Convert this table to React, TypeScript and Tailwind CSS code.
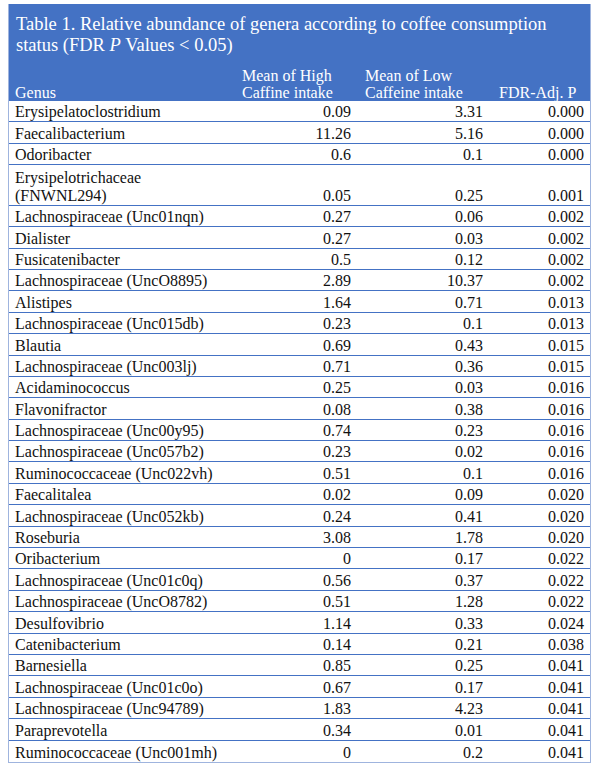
const rows: [string, string, string, string][] = [
  ['Erysipelatoclostridium', '0.09', '3.31', '0.000'],
  ['Faecalibacterium', '11.26', '5.16', '0.000'],
  ['Odoribacter', '0.6', '0.1', '0.000'],
  ['Erysipelotrichaceae\n(FNWNL294)', '0.05', '0.25', '0.001'],
  ['Lachnospiraceae (Unc01nqn)', '0.27', '0.06', '0.002'],
  ['Dialister', '0.27', '0.03', '0.002'],
  ['Fusicatenibacter', '0.5', '0.12', '0.002'],
  ['Lachnospiraceae (UncO8895)', '2.89', '10.37', '0.002'],
  ['Alistipes', '1.64', '0.71', '0.013'],
  ['Lachnospiraceae (Unc015db)', '0.23', '0.1', '0.013'],
  ['Blautia', '0.69', '0.43', '0.015'],
  ['Lachnospiraceae (Unc003lj)', '0.71', '0.36', '0.015'],
  ['Acidaminococcus', '0.25', '0.03', '0.016'],
  ['Flavonifractor', '0.08', '0.38', '0.016'],
  ['Lachnospiraceae (Unc00y95)', '0.74', '0.23', '0.016'],
  ['Lachnospiraceae (Unc057b2)', '0.23', '0.02', '0.016'],
  ['Ruminococcaceae (Unc022vh)', '0.51', '0.1', '0.016'],
  ['Faecalitalea', '0.02', '0.09', '0.020'],
  ['Lachnospiraceae (Unc052kb)', '0.24', '0.41', '0.020'],
  ['Roseburia', '3.08', '1.78', '0.020'],
  ['Oribacterium', '0', '0.17', '0.022'],
  ['Lachnospiraceae (Unc01c0q)', '0.56', '0.37', '0.022'],
  ['Lachnospiraceae (UncO8782)', '0.51', '1.28', '0.022'],
  ['Desulfovibrio', '1.14', '0.33', '0.024'],
  ['Catenibacterium', '0.14', '0.21', '0.038'],
  ['Barnesiella', '0.85', '0.25', '0.041'],
  ['Lachnospiraceae (Unc01c0o)', '0.67', '0.17', '0.041'],
  ['Lachnospiraceae (Unc94789)', '1.83', '4.23', '0.041'],
  ['Paraprevotella', '0.34', '0.01', '0.041'],
  ['Ruminococcaceae (Unc001mh)', '0', '0.2', '0.041'],
]

const cols = 'grid grid-cols-[227px_121px_132px_1fr]'

export default function App() {
  return (
    <div className="min-h-[771px] bg-white pt-[4px] pl-[8px]" style={{ fontFamily: '"Liberation Serif", "Times New Roman", serif' }}>
      <div className="w-[583px] border-x border-b border-[#9fb4de]">
        {/* blue header */}
        <div className="h-[97px] bg-[#4472c4] text-white">
          <div className="px-[7px] pt-[10px] text-[18.5px] leading-[21px]">
            Table 1. Relative abundance of genera according to coffee consumption
            <br />
            status (FDR <i>P</i> Values &lt; 0.05)
          </div>
          <div className={`${cols} mt-[11px] items-end text-[16px] leading-[17px]`}>
            <div className="px-[6px]">Genus</div>
            <div className="pl-[6px]">Mean of High<br />Caffine intake</div>
            <div className="pl-[8px]">Mean of Low<br />Caffeine intake</div>
            <div className="pl-[10px]">FDR-Adj. P</div>
          </div>
        </div>

        {rows.map(([genus, high, low, p], i) => {
          const two = genus.includes('\n')
          return (
            <div
              key={i}
              className={`${cols} items-end text-[16px] leading-[18px] text-[#111] ${two ? 'h-[40.6px]' : 'h-[21.4px]'} ${i < rows.length - 1 ? 'border-b border-[#4472c4]' : ''}`}
            >
              <div className="whitespace-pre-line px-[6px]">{genus}</div>
              <div className="pr-[6px] text-right">{high}</div>
              <div className="pr-[6px] text-right">{low}</div>
              <div className="pr-[6px] text-right">{p}</div>
            </div>
          )
        })}
      </div>
    </div>
  )
}
